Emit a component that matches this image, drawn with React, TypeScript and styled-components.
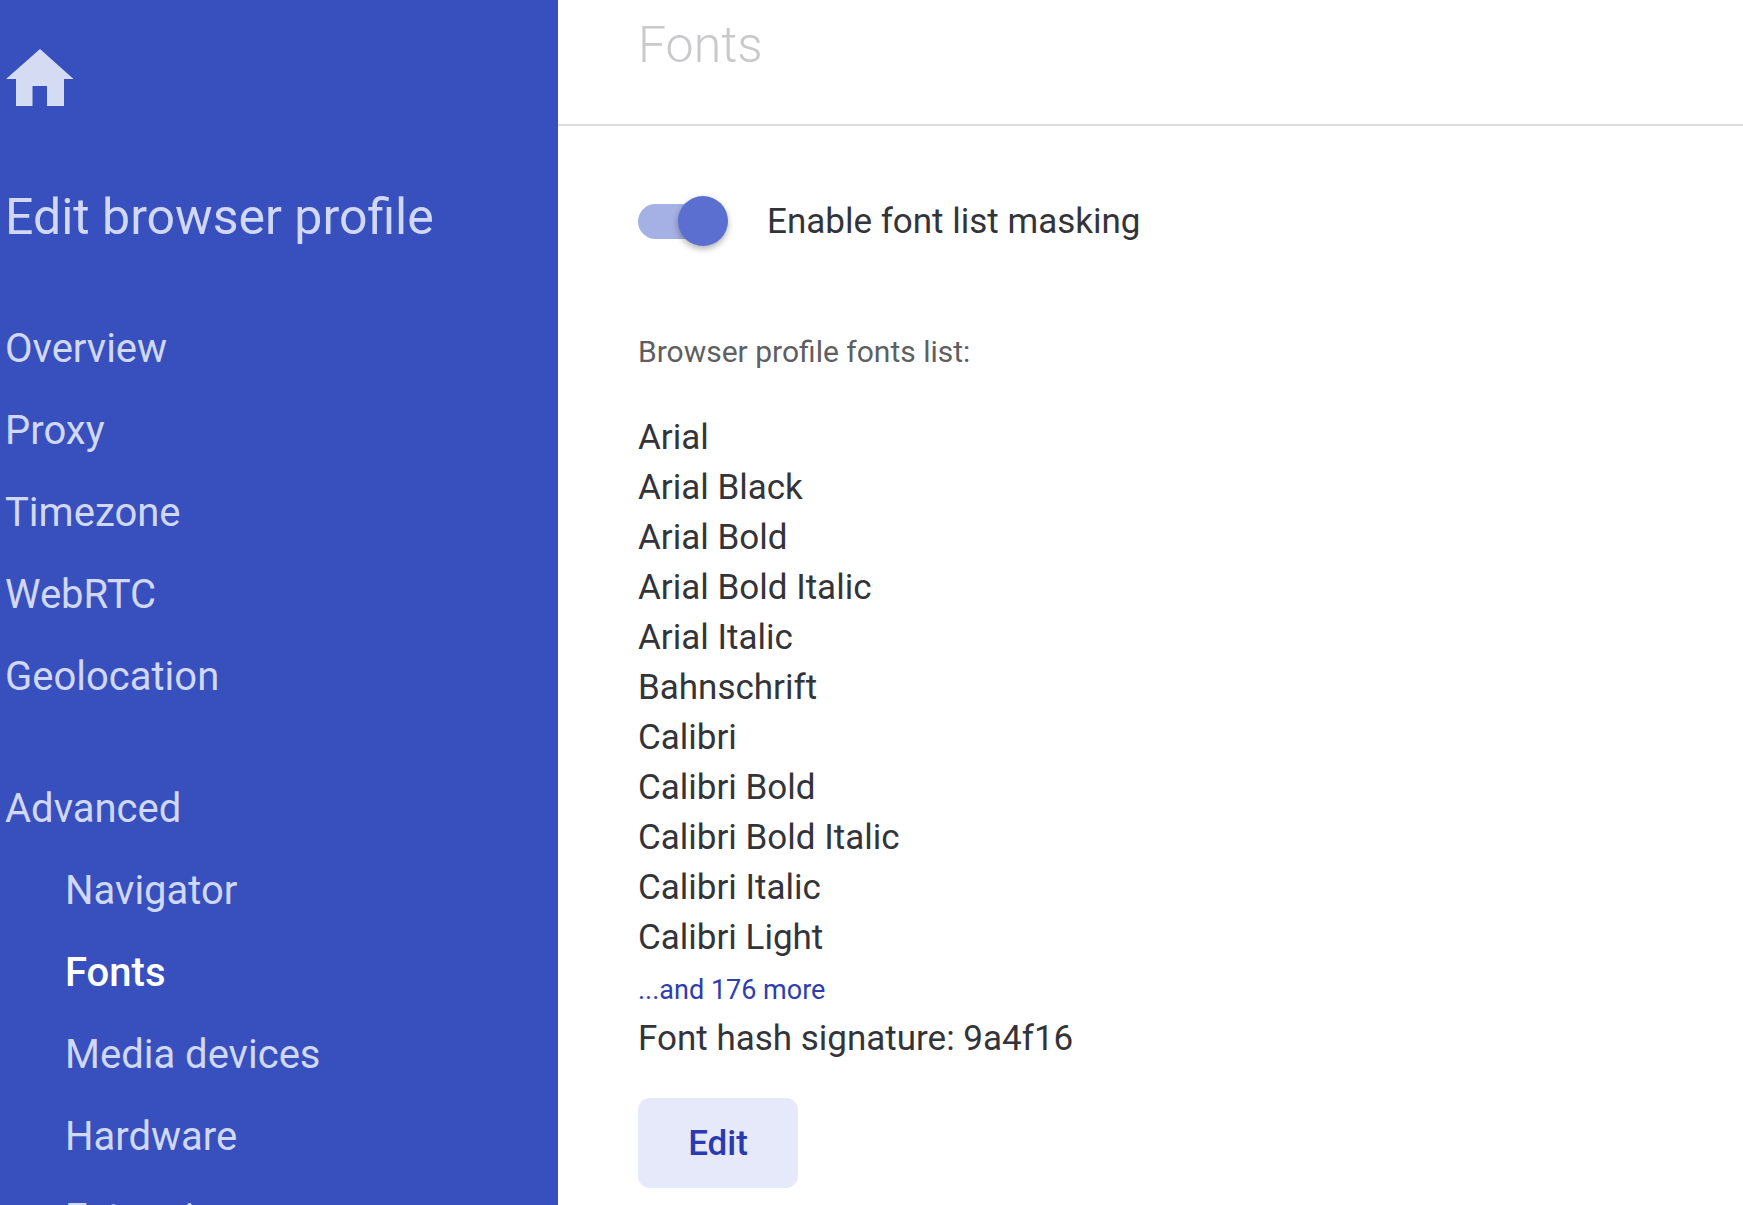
import styled, { createGlobalStyle } from "styled-components";

const GlobalStyle = createGlobalStyle`
  html, body {
    margin: 0;
    height: 100%;
    overflow: hidden;
    background: #fff;
    font-family: Roboto, "Liberation Sans", sans-serif;
  }
`;

const Page = styled.div`
  display: flex;
  height: 100vh;
  overflow: hidden;
`;

const Sidebar = styled.aside`
  flex: 0 0 558px;
  height: 100%;
  overflow: hidden;
  box-sizing: border-box;
  padding: 49px 0 0 5px;
  background: #3850be;
  color: #d0d8f5;
`;

const HomeLink = styled.a`
  display: block;
  width: 68px;
  height: 57px;
  margin-left: 1px;
  color: #d5dbf3;
  svg {
    display: block;
  }
`;

const SideTitle = styled.h1`
  margin: 76px 0 56px;
  font-size: 50px;
  line-height: 70px;
  font-weight: 400;
`;

const NavList = styled.nav`
  display: flex;
  flex-direction: column;
`;

const NavItem = styled.a<{ $sub?: boolean; $active?: boolean; $spaced?: boolean }>`
  display: block;
  height: 82px;
  line-height: 82px;
  font-size: 40px;
  padding-left: ${(p) => (p.$sub ? "60px" : "0")};
  margin-top: ${(p) => (p.$spaced ? "50px" : "0")};
  font-weight: ${(p) => (p.$active ? 500 : 400)};
  color: ${(p) => (p.$active ? "#ffffff" : "#d0d8f5")};
`;

const Main = styled.main`
  flex: 1;
  min-width: 0;
`;

const Header = styled.header`
  height: 126px;
  box-sizing: border-box;
  border-bottom: 2px solid #dddddd;
  padding: 15px 0 0 80px;
`;

const Heading = styled.h2`
  margin: 0;
  font-size: 50px;
  line-height: 60px;
  font-weight: 300;
  color: #c9c9cc;
`;

const Content = styled.section`
  padding: 70px 0 0 80px;
`;

const ToggleRow = styled.label`
  display: flex;
  align-items: center;
  gap: 44px;
  height: 50px;
  font-size: 35px;
  color: #33343a;
`;

const Track = styled.span`
  position: relative;
  display: block;
  width: 85px;
  height: 35px;
  border-radius: 18px;
  background: #a5b0e5;
`;

const Thumb = styled.span`
  position: absolute;
  top: -8px;
  right: -5px;
  width: 50px;
  height: 50px;
  border-radius: 50%;
  background: #5a6fd0;
  box-shadow: 0 3px 6px rgba(0, 0, 0, 0.3);
`;

const ListLabel = styled.div`
  margin-top: 81px;
  font-size: 30px;
  line-height: 50px;
  color: #5f5f63;
`;

const FontList = styled.ul`
  list-style: none;
  margin: 36px 0 0;
  padding: 0;
`;

const FontItem = styled.li`
  font-size: 35px;
  line-height: 50px;
  color: #33343a;
`;

const MoreLink = styled.a`
  display: block;
  margin-top: 4px;
  font-size: 27px;
  line-height: 47px;
  color: #2e3db0;
`;

const Signature = styled.div`
  font-size: 35px;
  line-height: 50px;
  color: #33343a;
`;

const EditButton = styled.button`
  display: block;
  margin-top: 34px;
  width: 160px;
  height: 90px;
  border: 0;
  border-radius: 12px;
  background: #e5e9fa;
  color: #2a3ab0;
  font-family: inherit;
  font-size: 35px;
  font-weight: 500;
`;

const fonts = [
  "Arial",
  "Arial Black",
  "Arial Bold",
  "Arial Bold Italic",
  "Arial Italic",
  "Bahnschrift",
  "Calibri",
  "Calibri Bold",
  "Calibri Bold Italic",
  "Calibri Italic",
  "Calibri Light",
];

function App() {
  return (
    <Page>
      <GlobalStyle />
      <Sidebar>
        <HomeLink>
          <svg width="68" height="57" viewBox="0 0 68 57" fill="currentColor">
            <path d="M34 0 L67.5 30 H58 V57 H41 V37 H26.5 V57 H10 V30 H0 Z" />
          </svg>
        </HomeLink>
        <SideTitle>Edit browser profile</SideTitle>
        <NavList>
          <NavItem>Overview</NavItem>
          <NavItem>Proxy</NavItem>
          <NavItem>Timezone</NavItem>
          <NavItem>WebRTC</NavItem>
          <NavItem>Geolocation</NavItem>
          <NavItem $spaced>Advanced</NavItem>
          <NavItem $sub>Navigator</NavItem>
          <NavItem $sub $active>Fonts</NavItem>
          <NavItem $sub>Media devices</NavItem>
          <NavItem $sub>Hardware</NavItem>
          <NavItem $sub>Extensions</NavItem>
        </NavList>
      </Sidebar>
      <Main>
        <Header>
          <Heading>Fonts</Heading>
        </Header>
        <Content>
          <ToggleRow>
            <Track>
              <Thumb />
            </Track>
            Enable font list masking
          </ToggleRow>
          <ListLabel>Browser profile fonts list:</ListLabel>
          <FontList>
            {fonts.map((f) => (
              <FontItem key={f}>{f}</FontItem>
            ))}
          </FontList>
          <MoreLink>...and 176 more</MoreLink>
          <Signature>Font hash signature: 9a4f16</Signature>
          <EditButton>Edit</EditButton>
        </Content>
      </Main>
    </Page>
  );
}

export default App;
